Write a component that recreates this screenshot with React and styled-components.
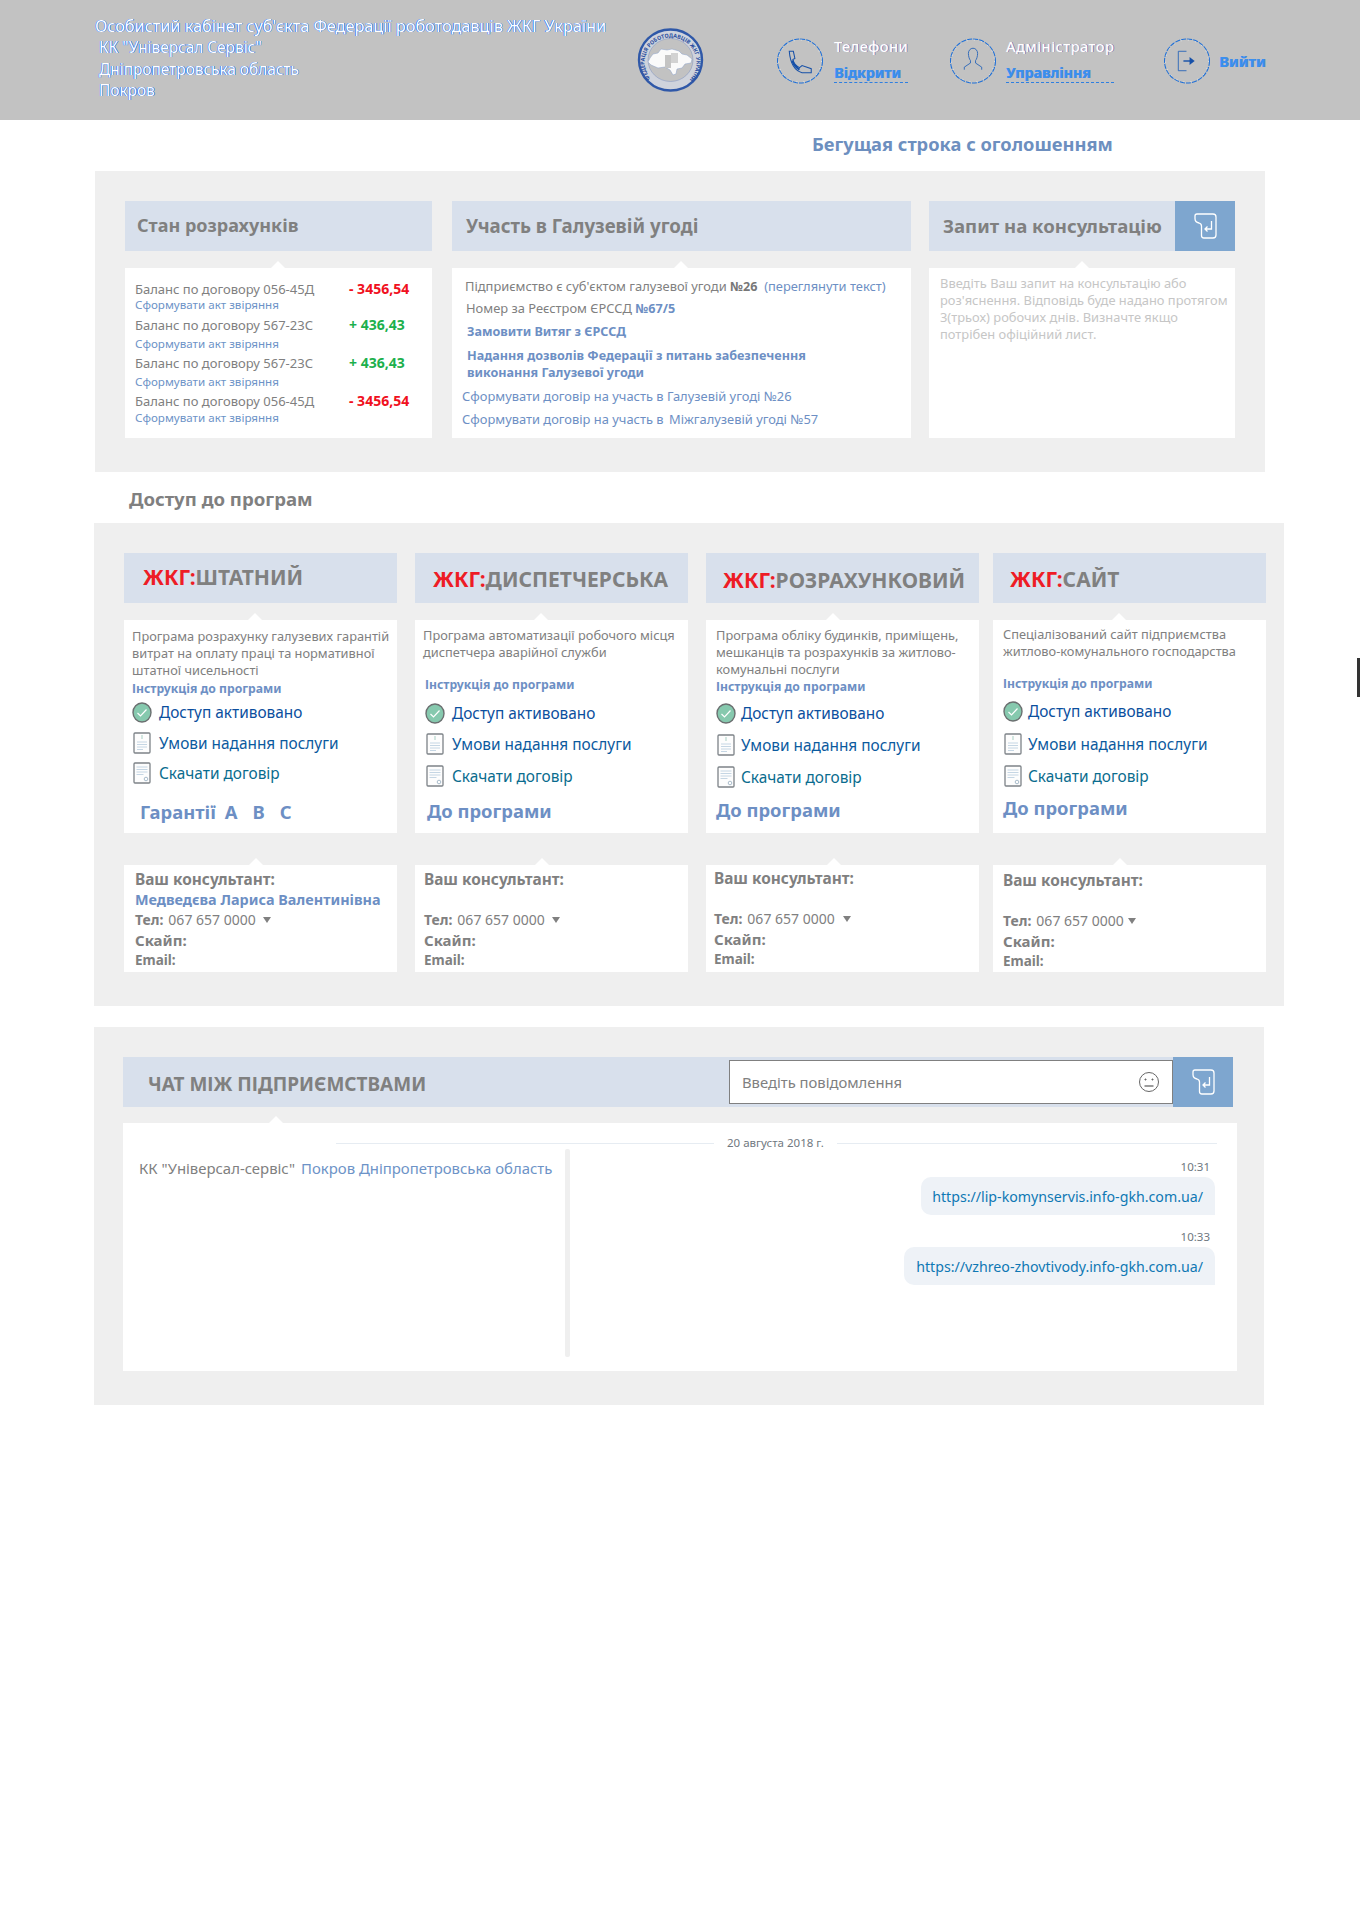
import React from 'react';
import styled, { createGlobalStyle } from 'styled-components';

const FONT = '"Noto Sans", "Open Sans", Arial, sans-serif';

const Global = createGlobalStyle`
  html, body { margin: 0; padding: 0; background: #fff; }
  body { font-family: ${FONT}; color: #808080; }
  * { box-sizing: border-box; }
`;

const Page = styled.div`
  position: relative;
  width: 1360px;
  height: 1912px;
  overflow: hidden;
`;

const Header = styled.header`
  height: 120px;
  background: #c2c2c2;
  display: flex;
  align-items: flex-start;
  padding-left: 95px;
`;
const Org = styled.div`
  width: 542px;
  padding-top: 15px;
  color: #fff;
  text-shadow: -0.6px 0 0 #1670f0, 0.6px 0 0 #1670f0;
`;
const OrgTitle = styled.div`
  font-size: 16.25px;
  line-height: 22px;
  white-space: nowrap;
`;
const OrgLine = styled.div`
  font-size: 15.4px;
  line-height: 21.5px;
  padding-left: 4px;
  &:first-of-type { margin-top: 6px; }
`;
const Logo = styled.svg`
  width: 67px;
  height: 64px;
  margin-top: 28px;
  flex: none;
`;
const Tool = styled.div`
  flex: none;
  display: flex;
  align-items: center;
  gap: ${(p) => p.$gap}px;
  width: ${(p) => p.$w}px;
  margin-left: ${(p) => p.$left || 0}px;
  margin-top: 38px;
  height: 46px;
`;
const ToolText = styled.div`
  display: flex;
  flex-direction: column;
  gap: 9px;
  align-self: flex-start;
  margin-top: -1px;
`;
const ToolLabel = styled.div`
  color: #fff;
  font-size: 14.6px;
  font-weight: 500;
  line-height: 18px;
  letter-spacing: 0.4px;
  text-shadow: 0.7px 0 0 rgba(60, 40, 160, 0.6);
`;
const ToolLink = styled.a`
  color: #3a90f0;
  font-size: 14.2px;
  font-weight: 700;
  line-height: 18px;
  border-bottom: 1px dashed #2f7fe0;
  text-shadow: 0.7px 0 0 rgba(20, 90, 220, 0.6);
`;
const ToolExit = styled(ToolLink)`
  border: 0;
  font-size: 14.6px;
`;

const Ticker = styled.div`
  height: 51px;
  padding: 13px 0 0 812px;
  color: #6d8fbf;
  font-size: 18.3px;
  font-weight: 700;
  line-height: 22px;
  white-space: nowrap;
`;

const Panel = styled.section`
  background: #efefef;
  margin-left: ${(p) => p.$x}px;
  width: ${(p) => p.$w}px;
  padding: ${(p) => p.$pad};
`;

const Row = styled.div`
  display: flex;
`;
const Col = styled.div`
  flex: none;
  width: ${(p) => p.$w}px;
  margin-left: ${(p) => p.$left || 0}px;
`;

const Head = styled.div`
  display: flex;
  align-items: center;
  height: 50px;
  background: #d8e0ec;
  padding-left: ${(p) => p.$x}px;
  color: #808080;
  font-size: ${(p) => p.$size || 18}px;
  font-weight: 700;
  white-space: nowrap;
`;
const HeadTitle = styled.span`
  flex: 1;
  padding-bottom: 2px;
`;
const Send = styled.div`
  flex: none;
  width: 60px;
  height: 50px;
  background: #7ea6cf;
  display: flex;
  align-items: center;
  justify-content: center;
`;

const Body = styled.div`
  position: relative;
  background: #fff;
  margin-top: ${(p) => p.$top ?? 17}px;
  height: ${(p) => p.$h}px;
  padding: ${(p) => p.$pad};
  &::before {
    content: '';
    position: absolute;
    top: -7px;
    left: ${(p) => p.$notch}px;
    border-left: 7px solid transparent;
    border-right: 7px solid transparent;
    border-bottom: 7px solid #fff;
  }
`;

const BalanceRow = styled.div`
  display: flex;
  height: ${(p) => p.$h}px;
  font-size: 13px;
  line-height: 16px;
  color: #808080;
`;
const BalanceName = styled.div`
  width: 214px;
  white-space: nowrap;
`;
const Amount = styled.div`
  font-size: 14px;
  font-weight: 700;
  color: ${(p) => (p.$plus ? '#1cb04c' : '#f01020')};
`;
const ActLink = styled.a`
  display: block;
  height: ${(p) => p.$h}px;
  font-size: 11.6px;
  line-height: 16px;
  color: #6d93c7;
  white-space: nowrap;
`;

const Line = styled.div`
  margin-left: ${(p) => p.$x}px;
  height: ${(p) => p.$h || 23}px;
  font-size: 12.9px;
  line-height: 17px;
  color: #808080;
  white-space: nowrap;
`;
const Num = styled.b`
  font-size: 12.6px;
  color: #777;
`;
const Blue = styled.span`
  color: #6d8fc4;
  font-weight: ${(p) => (p.$bold ? 700 : 400)};
  font-size: ${(p) => (p.$bold ? '12.6px' : 'inherit')};
`;
const Hint = styled.p`
  margin: 0;
  font-size: 12.9px;
  line-height: 17px;
  color: #c6c6c6;
`;

const SectionTitle = styled.h2`
  margin: 0;
  height: 51px;
  padding: 16px 0 0 129px;
  font-size: 18.6px;
  line-height: 22px;
  font-weight: 700;
  color: #808080;
`;

const ProgHead = styled(Head)`
  padding-top: ${(p) => p.$dy}px;
  padding-bottom: 2px;
  font-size: 21px;
`;
const Red = styled.span`
  color: #ee1c25;
`;
const Desc = styled.div`
  height: ${(p) => p.$h}px;
  font-size: 12.8px;
  line-height: 17px;
  color: #808080;
  white-space: pre-line;
`;
const Instruction = styled.a`
  display: block;
  height: 17px;
  margin-left: ${(p) => p.$indent}px;
  font-size: 12.2px;
  line-height: 17px;
  font-weight: 700;
  color: #6d8fc4;
  white-space: nowrap;
`;
const Item = styled.div`
  display: flex;
  align-items: center;
  height: 24px;
  margin-top: ${(p) => p.$top}px;
  margin-left: ${(p) => p.$indent}px;
  gap: ${(p) => p.$gap}px;
  font-size: 15.4px;
  color: ${(p) => p.$color};
  white-space: nowrap;
`;
const IconSlot = styled.span`
  flex: none;
  display: flex;
  justify-content: center;
  width: 20px;
`;
const Action = styled.a`
  display: flex;
  gap: ${(p) => p.$gap || 0}px;
  align-items: center;
  height: 28px;
  margin-top: ${(p) => p.$top}px;
  margin-left: ${(p) => p.$x}px;
  font-size: 18.4px;
  font-weight: 700;
  color: #6d8fc4;
  white-space: nowrap;
`;
const GuaranteeLabel = styled.span`
  margin-right: -6px;
`;

const ConsultRow = styled(Row)`
  margin-top: 32px;
`;
const ConsultLine = styled.div`
  height: 20px;
  font-size: ${(p) => p.$size}px;
  line-height: 20px;
  font-weight: 700;
  color: ${(p) => p.$color || '#808080'};
  white-space: nowrap;
`;
const Phone = styled.span`
  font-weight: 400;
  margin-left: 5px;
`;
const Caret = styled.i`
  display: inline-block;
  margin-left: ${(p) => p.$left}px;
  vertical-align: 2px;
  border-left: 4px solid transparent;
  border-right: 4px solid transparent;
  border-top: 6px solid #808080;
`;

const ChatPanel = styled(Panel)`
  margin-top: 21px;
`;
const ChatHead = styled(Head)`
  justify-content: flex-start;
`;
const ChatTitle = styled.span`
  width: 582px;
  padding-top: 4px;
  text-transform: uppercase;
  font-size: 19px;
`;
const InputBox = styled.div`
  flex: none;
  width: 444px;
  height: 44px;
  background: #fff;
  border: 1px solid #808080;
  display: flex;
  align-items: center;
  justify-content: space-between;
  padding: 0 12px;
  font-size: 14.8px;
  font-weight: 400;
  color: #808080;
`;
const ChatBody = styled.div`
  position: relative;
  background: #fff;
  margin-top: 16px;
  width: 1114px;
  height: 248px;
  display: flex;
  &::before {
    content: '';
    position: absolute;
    top: -7px;
    left: 146px;
    border-left: 7px solid transparent;
    border-right: 7px solid transparent;
    border-bottom: 7px solid #fff;
  }
`;
const Company = styled.div`
  width: 442px;
  padding: 35px 0 0 16px;
  font-size: 14.9px;
  line-height: 20px;
  white-space: nowrap;
  color: #808080;
`;
const CompanyPlace = styled.span`
  margin-left: 6px;
  color: #6d93c7;
`;
const Divider = styled.div`
  position: absolute;
  left: 442px;
  top: 26px;
  bottom: 14px;
  width: 5px;
  background: #efefef;
  border-radius: 2px;
`;
const DateRow = styled.div`
  position: absolute;
  left: 213px;
  right: 20px;
  top: 12px;
  display: flex;
  align-items: center;
  gap: 13px;
  font-size: 11.5px;
  line-height: 16px;
  color: #707880;
  &::before, &::after {
    content: '';
    height: 1px;
    background: #e6ecf2;
  }
  &::before { width: 378px; }
  &::after { flex: 1; }
`;
const Messages = styled.div`
  flex: 1;
  padding: 36px 22px 0 0;
  display: flex;
  flex-direction: column;
  align-items: flex-end;
`;
const Time = styled.div`
  font-size: 11.5px;
  line-height: 16px;
  color: #6e7780;
  padding-right: 5px;
  margin-top: ${(p) => p.$top || 0}px;
`;
const Bubble = styled.div`
  margin-top: 2px;
  height: 38px;
  padding: 0 12px;
  display: flex;
  align-items: center;
  justify-content: flex-end;
  width: ${(p) => p.$w}px;
  background: #eef2f7;
  border-radius: 10px 10px 0 10px;
  font-size: 14.2px;
  color: #0f78b4;
  white-space: nowrap;
`;

const EdgeTab = styled.div`
  position: absolute;
  right: 0;
  top: 658px;
  width: 3px;
  height: 39px;
  background: #333;
`;

const SendIcon = () => (
  <svg width="23" height="26" viewBox="0 0 23 26" fill="none" stroke="#fff" strokeWidth="1.3">
    <path d="M3 1h16a3 3 0 0 1 3 3v18a3 3 0 0 1-3 3H10a2.500 2.500 0 0 1-2.500-2.500V13c0-1.500-.8-2.500-2.500-3C2.500 9.500 1 8 1 5.500V3a2 2 0 0 1 2-2z" />
    <path d="M17.500 8v8h-6M13.500 13.500l-2.500 2.500 2.500 2.500" />
  </svg>
);

const Ring = ({ children }) => (
  <svg width="46" height="46" viewBox="0 0 45 45">
    <ellipse cx="22.500" cy="22.500" rx="22" ry="21.500" fill="none" stroke="#1d6fd8" strokeWidth="1" strokeDasharray="5 1" />
    <ellipse cx="22.500" cy="22.500" rx="21" ry="20.500" fill="none" stroke="#fff" strokeWidth="0.6" strokeDasharray="1 6" />
    {children}
  </svg>
);

const PhoneIcon = () => (
  <Ring>
    <path d="M12 13h4l1.500 7-2 1c1 4 4 7 6.500 8l2.500-2 9 3v4h-9c-7-2-11.500-9-12.500-21z" fill="none" stroke="#1650a8" strokeWidth="1" />
    <path d="M15 22c1 4 4 7 7 9" fill="none" stroke="#1650a8" strokeWidth="2" />
  </Ring>
);

const UserIcon = () => (
  <Ring>
    <path d="M18 15a4.500 5 0 0 1 9 0c0 3-1 6-2 7v2.500l6 4v2.500M20 22c-1-1-2-4-2-7M20 22v2.500l-6 4v2.500" fill="none" stroke="#2a66b8" strokeWidth="0.9" />
  </Ring>
);

const ExitIcon = () => (
  <Ring>
    <path d="M22 13h-8v19h8" fill="none" stroke="#2a66b8" strokeWidth="0.9" />
    <path d="M19 22.500h7" fill="none" stroke="#1650a8" strokeWidth="1.400" />
    <path d="M25 18.500l5 4-5 4z" fill="#1650a8" />
  </Ring>
);

const CheckIcon = () => (
  <svg width="20" height="21" viewBox="0 0 20 21">
    <ellipse cx="10" cy="10.500" rx="9" ry="9.500" fill="#86c9ae" stroke="#6b6f70" strokeWidth="1.400" />
    <path d="M5.500 11l3 3 6-6.500" fill="none" stroke="#fff" strokeWidth="1.200" />
  </svg>
);

const DocIcon = ({ seal }) => (
  <svg width="18" height="22" viewBox="0 0 18 22">
    <rect x="1" y="1" width="16" height="20" rx="1" fill="#fdfdfd" stroke="#7d8388" strokeWidth="1.300" />
    {seal ? (
      <>
        <path d="M3.500 5h11M3.500 7.500h11M3.500 10h11M3.500 12.500h7" stroke="#c5d6e4" strokeWidth="1" />
        <circle cx="13" cy="17" r="1.800" fill="none" stroke="#a9bccb" strokeWidth="1" />
      </>
    ) : (
      <>
        <path d="M9 3v4" stroke="#b8d8cf" strokeWidth="1.200" />
        <path d="M4 10h10M4 12.500h10M4 15h10M4 17.500h6" stroke="#c5d6e4" strokeWidth="1" />
      </>
    )}
  </svg>
);

const FaceIcon = () => (
  <svg width="22" height="22" viewBox="0 0 22 22" fill="none" stroke="#666" strokeWidth="1">
    <circle cx="11" cy="11" r="9.500" />
    <circle cx="7.500" cy="8.500" r="0.600" fill="#666" />
    <circle cx="14.500" cy="8.500" r="0.600" fill="#666" />
    <path d="M6.500 15h9" strokeWidth="1.300" />
  </svg>
);

const FederationLogo = () => (
  <Logo viewBox="0 0 67 64">
    <defs>
      <path id="seal-arc" d="M13.500 50.500A26 25 0 1 1 53.500 50.500" />
    </defs>
    <ellipse cx="33.500" cy="32" rx="31.500" ry="30.500" fill="#cfd3dc" stroke="#2f58a8" strokeWidth="2.400" />
    <ellipse cx="33.500" cy="32" rx="22.500" ry="21.500" fill="#c2c2c2" stroke="#7f93c0" strokeWidth="0.500" />
    <text fontSize="5.600" fontFamily={FONT} fontWeight="700" fill="#2c50a0">
      <textPath href="#seal-arc" textLength="116" lengthAdjust="spacingAndGlyphs">ФЕДЕРАЦІЯ РОБОТОДАВЦІВ ЖКГ УКРАЇНИ</textPath>
    </text>
    <path d="M13 30l3-4 5-1 3-4 6 1 5-1 7 2 3 3 5 1 5 4-1 4-6 1-3 4-5 1-1 5-3 1-3-5-5-3-7 1-7-3-3-3z" fill="#fafafa" stroke="#8ba0c8" strokeWidth="0.500" />
    <rect x="28" y="27" width="6" height="13" fill="#c4c4c4" />
    <rect x="34" y="25" width="7" height="10" fill="#d2d2d2" />
  </Logo>
);

const balances = [
  { name: '056-45Д', sum: '- 3456,54', row: 16, link: 20 },
  { name: '567-23С', sum: '+ 436,43', row: 19, link: 19 },
  { name: '567-23С', sum: '+ 436,43', row: 19, link: 19 },
  { name: '056-45Д', sum: '- 3456,54', row: 17, link: 16 },
];

const programs = [
  {
    name: 'ШТАТНИЙ', x: 19, dy: 0, notch: 124, left: 0, pad: '8px 6px 0 8px', descH: 52, indent: 0, gap: 7,
    desc: 'Програма розрахунку галузевих гарантій\nвитрат на оплату праці та нормативної\nштатної чисельності',
    tops: [3, 7, 6], action: 'g', actionTop: 12, actionX: 8,
    consultX: 11, consultTop: 5, caret: 7,
    person: 'Медведєва Лариса Валентинівна',
  },
  {
    name: 'ДИСПЕТЧЕРСЬКА', x: 18, dy: 4, notch: 119, left: 18, pad: '7px 6px 0 8px', descH: 49, indent: 2, gap: 7,
    desc: 'Програма автоматизації робочого місця\nдиспетчера аварійної служби',
    tops: [8, 7, 8], action: 'd', actionTop: 8, actionX: 4,
    consultX: 9, consultTop: 5, caret: 7,
  },
  {
    name: 'РОЗРАХУНКОВИЙ', x: 17, dy: 6, notch: 120, left: 18, pad: '7px 6px 0 10px', descH: 51, indent: 0, gap: 5,
    desc: 'Програма обліку будинків, приміщень,\nмешканців та розрахунків за житлово-\nкомунальні послуги',
    tops: [6, 8, 8], action: 'd', actionTop: 6, actionX: 0,
    consultX: 8, consultTop: 4, caret: 8,
  },
  {
    name: 'САЙТ', x: 17, dy: 4, notch: 119, left: 14, pad: '6px 6px 0 10px', descH: 49, indent: 0, gap: 5,
    desc: 'Спеціалізований сайт підприємства\nжитлово-комунального господарства',
    tops: [7, 9, 8], action: 'd', actionTop: 5, actionX: 0,
    consultX: 10, consultTop: 6, caret: 4,
  },
];

const App = () => (
  <Page>
    <Global />
    <Header>
      <Org>
        <OrgTitle>Особистий кабінет суб'єкта Федерації роботодавців ЖКГ України</OrgTitle>
        <OrgLine>КК "Універсал Сервіс"</OrgLine>
        <OrgLine>Дніпропетровська область</OrgLine>
        <OrgLine>Покров</OrgLine>
      </Org>
      <FederationLogo />
      <Tool $left={73} $w={173} $gap={11}>
        <PhoneIcon />
        <ToolText>
          <ToolLabel>Телефони</ToolLabel>
          <ToolLink>Відкрити</ToolLink>
        </ToolText>
      </Tool>
      <Tool $w={214} $gap={10}>
        <UserIcon />
        <ToolText>
          <ToolLabel>Адміністратор</ToolLabel>
          <ToolLink>Управління</ToolLink>
        </ToolText>
      </Tool>
      <Tool $w={110} $gap={9}>
        <ExitIcon />
        <ToolExit>Вийти</ToolExit>
      </Tool>
    </Header>

    <Ticker>Бегущая строка с оголошенням</Ticker>

    <Panel $x={95} $w={1170} $pad="30px 30px 34px">
      <Row>
        <Col $w={307}>
          <Head $x={12}><HeadTitle>Стан розрахунків</HeadTitle></Head>
          <Body $h={170} $notch={146} $pad="13px 0 0 10px">
            {balances.map((b, i) => (
              <React.Fragment key={i}>
                <BalanceRow $h={b.row}>
                  <BalanceName>Баланс по договору {b.name}</BalanceName>
                  <Amount $plus={b.sum[0] === '+'}>{b.sum}</Amount>
                </BalanceRow>
                <ActLink $h={b.link}>Сформувати акт звіряння</ActLink>
              </React.Fragment>
            ))}
          </Body>
        </Col>
        <Col $w={459} $left={20}>
          <Head $x={14} $size={18.7}><HeadTitle>Участь в Галузевій угоді</HeadTitle></Head>
          <Body $h={170} $notch={222} $pad="10px 0 0 0">
            <Line $x={13} $h={22}>Підприємство є суб'єктом галузевої угоди <Num>№26</Num>&nbsp; <Blue>(переглянути текст)</Blue></Line>
            <Line $x={14}>Номер за Реєстром ЄРССД <Blue $bold>№67/5</Blue></Line>
            <Line $x={15} $h={24}><Blue $bold>Замовити Витяг з ЄРССД</Blue></Line>
            <Line $x={15} $h={17}><Blue $bold>Надання дозволів Федерації з питань забезпечення</Blue></Line>
            <Line $x={15} $h={24}><Blue $bold>виконання Галузевої угоди</Blue></Line>
            <Line $x={10}><Blue>Сформувати договір на участь в Галузевій угоді №26</Blue></Line>
            <Line $x={10}><Blue>Сформувати договір на участь в{'\u2009'} Міжгалузевій угоді №57</Blue></Line>
          </Body>
        </Col>
        <Col $w={306} $left={18}>
          <Head $x={14} $size={18.6}>
            <HeadTitle>Запит на консультацію</HeadTitle>
            <Send><SendIcon /></Send>
          </Head>
          <Body $h={170} $notch={146} $pad="7px 4px 0 11px">
            <Hint>Введіть Ваш запит на консультацію або роз'яснення. Відповідь буде надано протягом 3(трьох) робочих днів. Визначте якщо потрібен офіційний лист.</Hint>
          </Body>
        </Col>
      </Row>
    </Panel>

    <SectionTitle>Доступ до програм</SectionTitle>

    <Panel $x={94} $w={1190} $pad="30px 0 34px 30px">
      <Row>
        {programs.map((p) => (
          <Col key={p.name} $w={273} $left={p.left}>
            <ProgHead $x={p.x} $dy={p.dy}>
              <span><Red>ЖКГ:</Red>{p.name}</span>
            </ProgHead>
            <Body $h={213} $notch={p.notch} $pad={p.pad}>
              <Desc $h={p.descH}>{p.desc}</Desc>
              <Instruction $indent={p.indent}>Інструкція до програми</Instruction>
              <Item $top={p.tops[0]} $indent={p.indent} $gap={p.gap} $color="#0b4f9e">
                <IconSlot><CheckIcon /></IconSlot>Доступ активовано
              </Item>
              <Item $top={p.tops[1]} $indent={p.indent} $gap={p.gap} $color="#0b5a9e">
                <IconSlot><DocIcon /></IconSlot>Умови надання послуги
              </Item>
              <Item $top={p.tops[2]} $indent={p.indent} $gap={p.gap} $color="#0a6c8e">
                <IconSlot><DocIcon seal /></IconSlot>Скачати договір
              </Item>
              {p.action === 'g' ? (
                <Action $top={p.actionTop} $x={p.actionX} $gap={15}>
                  <GuaranteeLabel>Гарантії</GuaranteeLabel><span>А</span><span>В</span><span>С</span>
                </Action>
              ) : (
                <Action $top={p.actionTop} $x={p.actionX}>До програми</Action>
              )}
            </Body>
          </Col>
        ))}
      </Row>
      <ConsultRow>
        {programs.map((p) => (
          <Col key={p.name} $w={273} $left={p.left}>
            <Body $top={0} $h={107} $notch={p.notch + 1} $pad={`${p.consultTop}px 0 0 ${p.consultX}px`}>
              <ConsultLine $size={15.4}>Ваш консультант:</ConsultLine>
              <ConsultLine $size={14.4} $color="#6d8fc4">{p.person || '\u00a0'}</ConsultLine>
              <ConsultLine $size={14}>Тел:<Phone>067 657 0000</Phone><Caret $left={p.caret} /></ConsultLine>
              <ConsultLine $size={15}>Скайп:</ConsultLine>
              <ConsultLine $size={13.5}>Email:</ConsultLine>
            </Body>
          </Col>
        ))}
      </ConsultRow>
    </Panel>

    <ChatPanel $x={94} $w={1170} $pad="30px 31px 34px 29px">
      <ChatHead $x={25}>
        <ChatTitle>Чат між підприємствами</ChatTitle>
        <InputBox>
          Введіть повідомлення
          <FaceIcon />
        </InputBox>
        <Send><SendIcon /></Send>
      </ChatHead>
      <ChatBody>
        <DateRow>20 августа 2018 г.</DateRow>
        <Divider />
        <Company>КК "Універсал-сервіс"<CompanyPlace>Покров Дніпропетровська область</CompanyPlace></Company>
        <Messages>
          <Time>10:31</Time>
          <Bubble $w={294}>https://lip-komynservis.info-gkh.com.ua/</Bubble>
          <Time $top={14}>10:33</Time>
          <Bubble $w={311}>https://vzhreo-zhovtivody.info-gkh.com.ua/</Bubble>
        </Messages>
      </ChatBody>
    </ChatPanel>

    <EdgeTab />
  </Page>
);

export default App;
